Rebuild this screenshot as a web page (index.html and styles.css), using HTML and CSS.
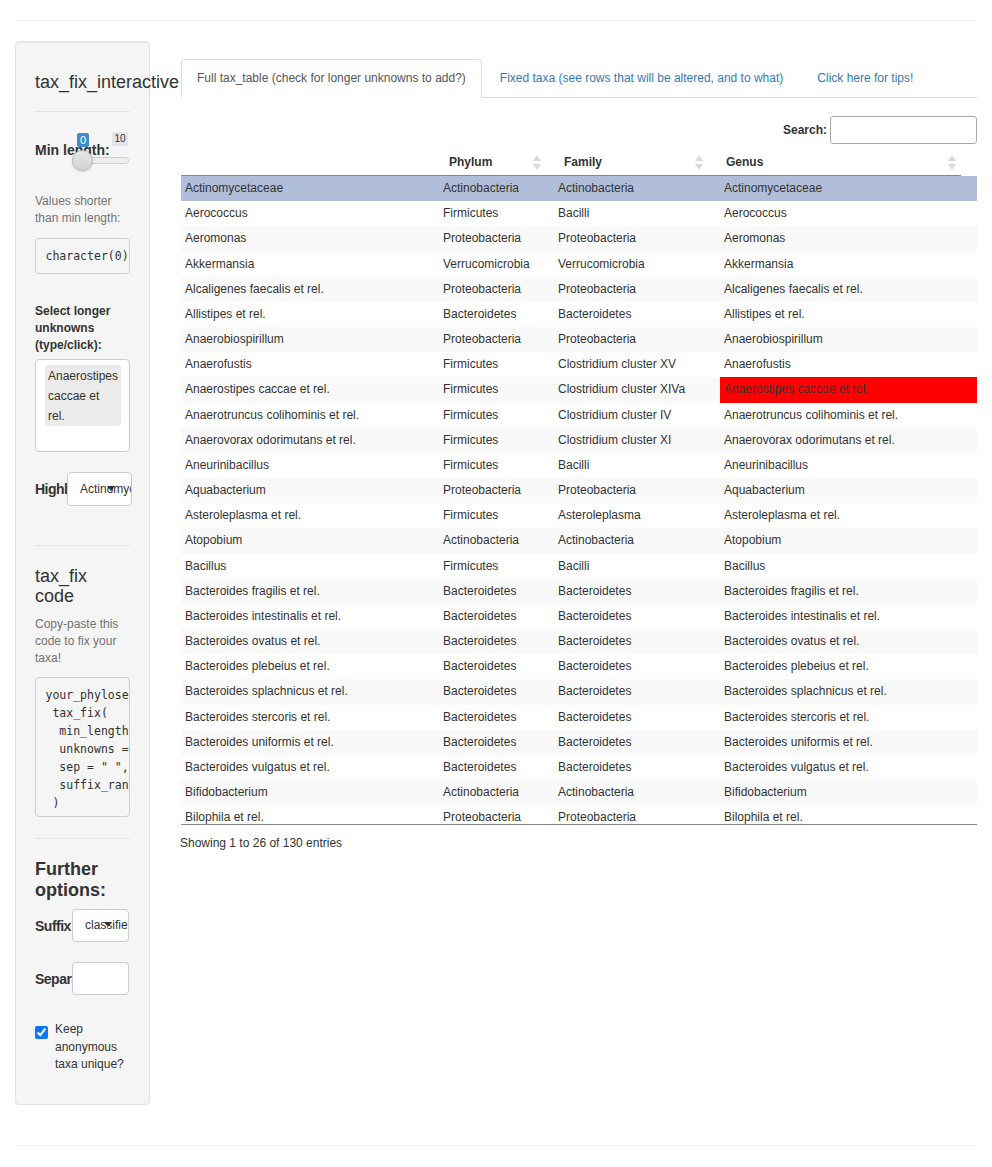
FILE: index.html
```html
<!DOCTYPE html>
<html>
<head>
<meta charset="utf-8">
<title>tax_fix_interactive</title>
<link rel="stylesheet" href="styles.css">
</head>
<body>
<div class="page">
  <hr class="rule">
  <div class="row">
    <aside class="well">
      <h2 class="title">tax_fix_interactive</h2>
      <hr class="sep first">
      <div class="slider-group">
        <label class="lbl14">Min length:</label>
        <div class="slider">
          <span class="track"></span>
          <span class="badge from">0</span>
          <span class="badge max">10</span>
          <span class="handle"></span>
        </div>
      </div>
      <p class="help help-values">Values shorter than min length:</p>
      <pre class="pre pre-short">character(0)</pre>
      <p class="lbl12">Select longer unknowns (type/click):</p>
      <div class="selectize">
        <div class="item">Anaerostipes caccae et rel.</div>
      </div>
      <div class="inline-field highl">
        <span class="inline-label w32">Highlight</span>
        <div class="select-box w65">Actinomycetaceae<span class="caret c-highl"></span></div>
      </div>
      <hr class="sep second">
      <h3 class="subtitle">tax_fix code</h3>
      <p class="help help-copy">Copy-paste this code to fix your taxa!</p>
      <pre class="pre pre-code">your_phyloseq %&gt;%
 tax_fix(
  min_length = 4,
  unknowns = c("Anaerostipes caccae et rel."),
  sep = " ", anon_unique = TRUE,
  suffix_rank = "classified"
 )</pre>
      <hr class="sep third">
      <h3 class="subtitle bold">Further options:</h3>
      <div class="inline-field suffix">
        <span class="inline-label w37">Suffix rank</span>
        <div class="select-box w57 pl13">classified<span class="caret c-suffix"></span></div>
      </div>
      <div class="inline-field separ">
        <span class="inline-label w37">Separator</span>
        <div class="select-box w57"></div>
      </div>
      <div class="check-row">
        <input type="checkbox" checked class="chk">
        <span class="check-text">Keep anonymous taxa unique?</span>
      </div>
    </aside>
    <main class="main">
      <ul class="tabs">
        <li class="tab active">Full tax_table (check for longer unknowns to add?)</li>
        <li class="tab">Fixed taxa (see rows that will be altered, and to what)</li>
        <li class="tab">Click here for tips!</li>
      </ul>
      <div class="search-row">
        <label class="search-label">Search:</label>
        <span class="search-input"></span>
      </div>
      <table class="dt-head">
        <colgroup><col class="h1"><col class="h2"><col class="h3"><col class="h4"></colgroup>
        <thead>
          <tr>
            <th></th>
            <th>Phylum<svg class="sort" width="8" height="15" viewBox="0 0 8 15"><path d="M4 0L8 6H0Z M4 15L0 9H8Z" fill="#dadada"/></svg></th>
            <th>Family<svg class="sort" width="8" height="15" viewBox="0 0 8 15"><path d="M4 0L8 6H0Z M4 15L0 9H8Z" fill="#dadada"/></svg></th>
            <th>Genus<svg class="sort sort-last" width="8" height="15" viewBox="0 0 8 15"><path d="M4 0L8 6H0Z M4 15L0 9H8Z" fill="#dadada"/></svg></th>
          </tr>
        </thead>
      </table>
      <div class="scroll-body">
      <table class="dt">
        <colgroup><col class="b1"><col class="b2"><col class="b3"><col class="b4"></colgroup>
        <tbody>
          <tr class="selected"><td>Actinomycetaceae</td><td>Actinobacteria</td><td>Actinobacteria</td><td>Actinomycetaceae</td></tr>
          <tr><td>Aerococcus</td><td>Firmicutes</td><td>Bacilli</td><td>Aerococcus</td></tr>
          <tr><td>Aeromonas</td><td>Proteobacteria</td><td>Proteobacteria</td><td>Aeromonas</td></tr>
          <tr><td>Akkermansia</td><td>Verrucomicrobia</td><td>Verrucomicrobia</td><td>Akkermansia</td></tr>
          <tr><td>Alcaligenes faecalis et rel.</td><td>Proteobacteria</td><td>Proteobacteria</td><td>Alcaligenes faecalis et rel.</td></tr>
          <tr><td>Allistipes et rel.</td><td>Bacteroidetes</td><td>Bacteroidetes</td><td>Allistipes et rel.</td></tr>
          <tr><td>Anaerobiospirillum</td><td>Proteobacteria</td><td>Proteobacteria</td><td>Anaerobiospirillum</td></tr>
          <tr><td>Anaerofustis</td><td>Firmicutes</td><td>Clostridium cluster XV</td><td>Anaerofustis</td></tr>
          <tr><td>Anaerostipes caccae et rel.</td><td>Firmicutes</td><td>Clostridium cluster XIVa</td><td class="hl">Anaerostipes caccae et rel.</td></tr>
          <tr><td>Anaerotruncus colihominis et rel.</td><td>Firmicutes</td><td>Clostridium cluster IV</td><td>Anaerotruncus colihominis et rel.</td></tr>
          <tr><td>Anaerovorax odorimutans et rel.</td><td>Firmicutes</td><td>Clostridium cluster XI</td><td>Anaerovorax odorimutans et rel.</td></tr>
          <tr><td>Aneurinibacillus</td><td>Firmicutes</td><td>Bacilli</td><td>Aneurinibacillus</td></tr>
          <tr><td>Aquabacterium</td><td>Proteobacteria</td><td>Proteobacteria</td><td>Aquabacterium</td></tr>
          <tr><td>Asteroleplasma et rel.</td><td>Firmicutes</td><td>Asteroleplasma</td><td>Asteroleplasma et rel.</td></tr>
          <tr><td>Atopobium</td><td>Actinobacteria</td><td>Actinobacteria</td><td>Atopobium</td></tr>
          <tr><td>Bacillus</td><td>Firmicutes</td><td>Bacilli</td><td>Bacillus</td></tr>
          <tr><td>Bacteroides fragilis et rel.</td><td>Bacteroidetes</td><td>Bacteroidetes</td><td>Bacteroides fragilis et rel.</td></tr>
          <tr><td>Bacteroides intestinalis et rel.</td><td>Bacteroidetes</td><td>Bacteroidetes</td><td>Bacteroides intestinalis et rel.</td></tr>
          <tr><td>Bacteroides ovatus et rel.</td><td>Bacteroidetes</td><td>Bacteroidetes</td><td>Bacteroides ovatus et rel.</td></tr>
          <tr><td>Bacteroides plebeius et rel.</td><td>Bacteroidetes</td><td>Bacteroidetes</td><td>Bacteroides plebeius et rel.</td></tr>
          <tr><td>Bacteroides splachnicus et rel.</td><td>Bacteroidetes</td><td>Bacteroidetes</td><td>Bacteroides splachnicus et rel.</td></tr>
          <tr><td>Bacteroides stercoris et rel.</td><td>Bacteroidetes</td><td>Bacteroidetes</td><td>Bacteroides stercoris et rel.</td></tr>
          <tr><td>Bacteroides uniformis et rel.</td><td>Bacteroidetes</td><td>Bacteroidetes</td><td>Bacteroides uniformis et rel.</td></tr>
          <tr><td>Bacteroides vulgatus et rel.</td><td>Bacteroidetes</td><td>Bacteroidetes</td><td>Bacteroides vulgatus et rel.</td></tr>
          <tr><td>Bifidobacterium</td><td>Actinobacteria</td><td>Actinobacteria</td><td>Bifidobacterium</td></tr>
          <tr><td>Bilophila et rel.</td><td>Proteobacteria</td><td>Proteobacteria</td><td>Bilophila et rel.</td></tr>
        </tbody>
      </table>
      </div>
      <div class="info">Showing 1 to 26 of 130 entries</div>
    </main>
  </div>
  <hr class="rule bottom">
</div>
</body>
</html>
```

FILE: styles.css
```css
* { box-sizing: border-box; }
body {
  margin: 0;
  font-family: "Liberation Sans", Arial, sans-serif;
  font-size: 12px;
  color: #333;
  background: #fff;
}
.page { padding: 0 15px; }
.rule {
  border: 0;
  border-top: 1px solid #eee;
  margin: 20px 0 0;
  height: 0;
}
.rule.bottom { margin-top: 40px; margin-bottom: 20px; }
.row {
  display: flex;
  align-items: flex-start;
  gap: 31px;
  margin-top: 20px;
}

/* Sidebar */
.well {
  flex: none;
  width: 135px;
  padding: 19px;
  background: #f5f5f5;
  border: 1px solid #e3e3e3;
  border-radius: 4px;
  box-shadow: inset 0 1px 1px rgba(0,0,0,.05);
}
.title {
  margin: 11px 0 0;
  font-size: 18px;
  line-height: 20px;
  font-weight: 400;
  white-space: nowrap;
}
.sep {
  border: 0;
  border-top: 1px solid #e4e4e4;
  margin: 19px 0 0;
  height: 0;
}
.sep.second { margin-top: 39px; }
.sep.third { margin-top: 21px; }
.slider-group {
  position: relative;
  padding-top: 28px;
}
.lbl14 {
  display: block;
  font-size: 14px;
  line-height: 20px;
  font-weight: 700;
}
.slider {
  position: absolute;
  left: 0;
  top: 0;
  width: 100%;
  height: 60px;
}
.track {
  position: absolute;
  left: 37px;
  top: 45px;
  width: 57px;
  height: 7px;
  border: 1px solid #cfcfcf;
  border-radius: 4px;
  background: #eee;
}
.handle {
  position: absolute;
  left: 37px;
  top: 38px;
  width: 21px;
  height: 21px;
  border-radius: 50%;
  border: 1px solid #b5b5b5;
  background: linear-gradient(#e8e8e8, #d2d2d2);
  box-shadow: 0 1px 2px rgba(0,0,0,.15);
}
.badge {
  position: absolute;
  height: 14px;
  font-size: 10px;
  line-height: 14px;
  text-align: center;
  border-radius: 2px;
}
.badge.from {
  left: 42px;
  top: 21px;
  width: 12px;
  background: #428bca;
  color: #fff;
  font-size: 11px;
}
.badge.max {
  left: 77px;
  top: 20px;
  width: 16px;
  background: #e1e4e9;
  color: #333;
}
.help {
  margin: 0;
  color: #737373;
  font-size: 12px;
  line-height: 17px;
}
.help-values { margin-top: 33px; }
.help-copy { margin-top: 10px; }
.pre {
  margin: 0;
  font-family: "DejaVu Sans Mono", "Liberation Mono", monospace;
  font-size: 11.5px;
  line-height: 18px;
  color: #333;
  background: #f5f5f5;
  border: 1px solid #ccc;
  border-radius: 4px;
  overflow: hidden;
  white-space: pre;
}
.pre-short { margin-top: 11px; padding: 8px 9.5px; }
.pre-code { margin-top: 10px; padding: 8px 9.5px 4px; }
.lbl12 {
  margin: 29px 0 0;
  font-size: 12px;
  line-height: 17px;
  font-weight: 700;
}
.selectize {
  margin-top: 5px;
  height: 93px;
  background: #fff;
  border: 1px solid #ccc;
  border-radius: 4px;
  padding: 5px 9px;
}
.item {
  width: 76px;
  background: #ebebeb;
  border-radius: 3px;
  padding: 1px 2px 0 3px;
  font-size: 12px;
  line-height: 20px;
}
.inline-field {
  display: flex;
  align-items: center;
}
.inline-field.highl { margin-top: 20px; }
.inline-field.suffix { margin-top: 8px; }
.inline-field.separ { margin-top: 20px; }
.inline-label {
  flex: none;
  overflow: hidden;
  white-space: nowrap;
  font-size: 14px;
  font-weight: 700;
  line-height: 20px;
  letter-spacing: -0.5px;
}
.w32 { width: 32px; }
.w37 { width: 37px; }
.select-box {
  position: relative;
  flex: none;
  height: 34px;
  background: #fff;
  border: 1px solid #ccc;
  border-radius: 4px;
  padding-left: 12px;
  font-size: 12px;
  line-height: 32px;
  overflow: hidden;
  white-space: nowrap;
}
.w65 { width: 65px; }
.w57 { width: 57px; height: 33px; line-height: 31px; }
.pl13 { padding-left: 12px; }
.caret {
  position: absolute;
  width: 0;
  height: 0;
  border-left: 4px solid transparent;
  border-right: 4px solid transparent;
  border-top: 5px solid #333;
}
.c-highl { left: 39px; top: 13px; }
.c-suffix { left: 31px; top: 12px; }
.subtitle {
  margin: 20px 0 0;
  font-size: 18px;
  line-height: 20px;
  font-weight: 400;
}
.subtitle.bold {
  margin-top: 20px;
  font-weight: 700;
  line-height: 21px;
}
.check-row {
  display: flex;
  align-items: flex-start;
  margin-top: 26px;
  margin-bottom: 11px;
}
.chk {
  flex: none;
  width: 13px;
  height: 13px;
  margin: 5px 0 0;
  accent-color: #0a75ff;
}
.check-text {
  margin-left: 7px;
  font-size: 12px;
  line-height: 17.5px;
}

/* Main */
.main {
  flex: 1;
  min-width: 0;
  padding-top: 18px;
}
.tabs {
  display: flex;
  margin: 0;
  padding: 0;
  list-style: none;
  border-bottom: 1px solid #ddd;
}
.tab {
  padding: 10px 15px;
  line-height: 17px;
  font-size: 12px;
  color: #337ab7;
  border: 1px solid transparent;
  border-radius: 4px 4px 0 0;
  margin-right: 2px;
  margin-bottom: -1px;
  white-space: nowrap;
}
.tab.active {
  color: #555;
  background: #fff;
  border-color: #ddd #ddd transparent;
}
.search-row {
  display: flex;
  justify-content: flex-end;
  align-items: center;
  margin-top: 18px;
}
.search-label {
  font-weight: 700;
  font-size: 12px;
}
.search-input {
  width: 147px;
  height: 28px;
  margin-left: 3px;
  border: 1px solid #aaa;
  border-radius: 3px;
  background: #fff;
}
.dt-head {
  margin-top: 6px;
  width: 780px;
  border-collapse: collapse;
  table-layout: fixed;
}
.h1 { width: 258px; }
.h2 { width: 115px; }
.h3 { width: 162px; }
.h4 { width: 245px; }
.dt-head th {
  position: relative;
  text-align: left;
  font-weight: 700;
  font-size: 12px;
  line-height: 17px;
  padding: 4px 10px;
  border-bottom: 1px solid #888;
}
.sort {
  position: absolute;
  right: 13px;
  top: 5px;
}
.sort.sort-last { right: 5px; }
.scroll-body {
  height: 649px;
  overflow: hidden;
  border-bottom: 1px solid #888;
}
.dt {
  width: 796px;
  border-collapse: collapse;
  table-layout: fixed;
}
.b1 { width: 258px; }
.b2 { width: 115px; }
.b3 { width: 166px; }
.b4 { width: 257px; }
.dt td {
  padding: 4px;
  line-height: 17.17px;
  font-size: 12px;
  white-space: nowrap;
  overflow: hidden;
}
.dt tr:nth-child(odd) td { background: #f9f9f9; }
.dt tr.selected td { background: #b0bed9; }
.dt td.hl { background: #ff0000 !important; }
.info {
  padding-top: 10px;
  font-size: 12px;
  line-height: 17px;
  margin-left: -1px;
}
```
